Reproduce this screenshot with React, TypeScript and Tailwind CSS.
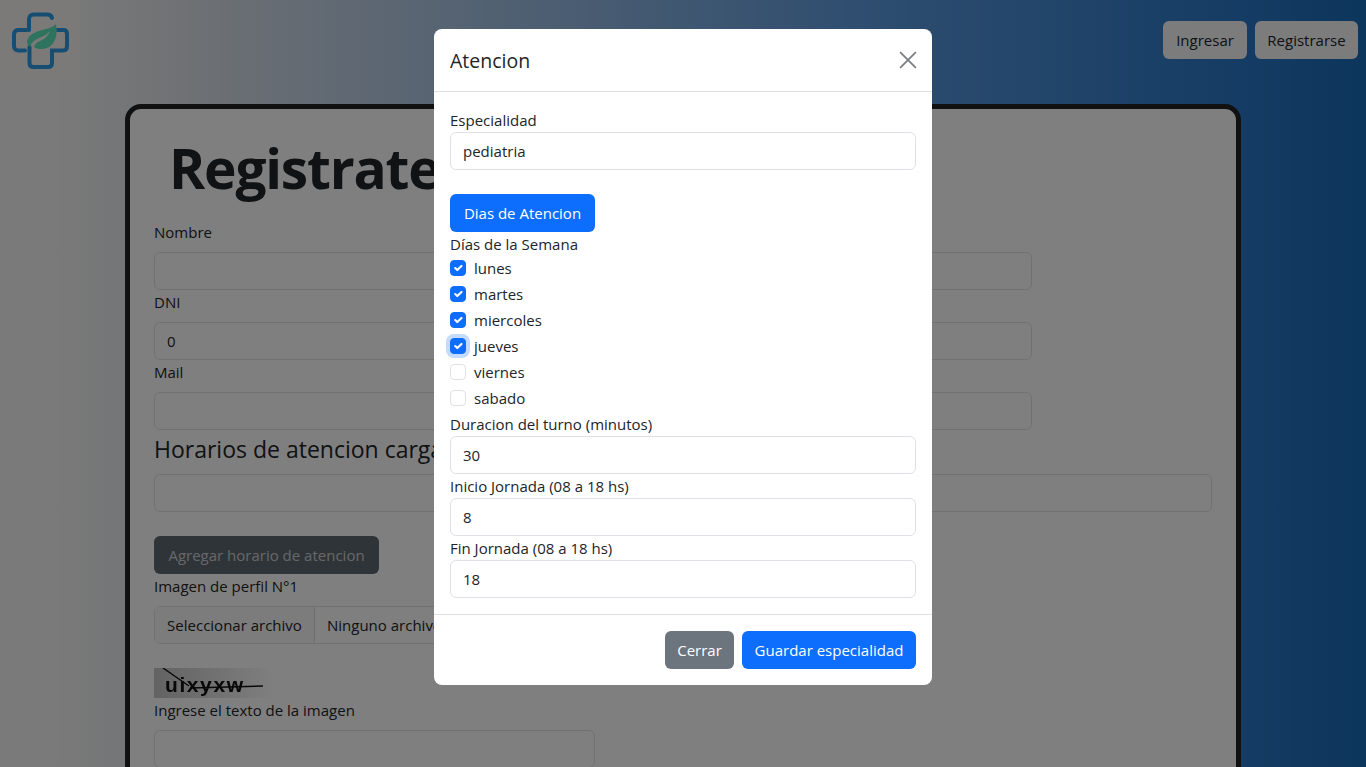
const FONT = "font-['Open_Sans','Noto_Sans',sans-serif]";

const DIAS = [
  { nombre: "lunes", checked: true },
  { nombre: "martes", checked: true },
  { nombre: "miercoles", checked: true },
  { nombre: "jueves", checked: true, focus: true },
  { nombre: "viernes", checked: false },
  { nombre: "sabado", checked: false },
];

const Logo = () => (
  <svg width="80" height="80" viewBox="0 0 80 80" fill="none">
    <path
      d="M29 30V19c0-3 2-4.500 4.500-4.500H47c3 0 4.500 1 5 3.500M27 30H18c-2.500 0-4 2-4 4.500V46c0 3 2 4.500 4 4.500h7M57 30h7c2 0 3 2 3 4.500V46c0 3-1.500 4.500-4 4.500H52V63c0 2.500-1.500 4-4 4H33.500C31 67 29.500 65.500 29.500 63V47"
      stroke="#2a9ce4"
      strokeWidth="4"
      strokeLinecap="round"
    />
    <path d="M56 24c-5 5-13 5-20 8-5 2-8 5-9 9 0 3 1 5 3 6 1-4 4-7 9-9 4-2 8-3 11-7-2 5-5 8-10 10-3 1-5 3-6 6 3 2 8 3 13 1 8-3 11-13 9-24z" fill="#5ce6bc" />
  </svg>
);

const Captcha = () => (
  <svg width="120" height="30" viewBox="0 0 120 30" className="block">
    <defs>
      <linearGradient id="captcha-bg" x1="0" x2="1" y1="0" y2="0">
        <stop offset="0" stopColor="#c6c6c6" />
        <stop offset="0.75" stopColor="#f0f0f0" />
        <stop offset="1" stopColor="#ffffff" />
      </linearGradient>
    </defs>
    <rect width="120" height="30" fill="url(#captcha-bg)" />
    <text x="11" y="24" fontFamily="Liberation Sans" fontWeight="700" fontSize="21" fill="#111" textLength="78" lengthAdjust="spacing" className="blur-[0.6px]">
      uixyxw
    </text>
    <path d="M9 0l26 18M36 20l73-2" stroke="#111" strokeWidth="1.4" fill="none" />
  </svg>
);

const Input = ({ value = "" }: { value?: string }) => (
  <div className="h-[38px] w-full rounded-md border border-[#dee2e6] bg-white px-3 leading-[36px] text-[#212529]">{value}</div>
);

const Field = ({ label, value = "" }: { label: string; value?: string }) => (
  <div>
    <label className="mb-2 block h-6">{label}</label>
    <Input value={value} />
  </div>
);

const ModalField = ({ label, value }: { label: string; value: string }) => (
  <div>
    <label className="block h-6">{label}</label>
    <Input value={value} />
  </div>
);

const Check = ({ nombre, checked, focus }: { nombre: string; checked: boolean; focus?: boolean }) => (
  <div className="flex h-[26px] items-center gap-2 pb-[2px]">
    <span
      className={
        "flex h-4 w-4 items-center justify-center rounded border " +
        (checked ? "border-[#0d6efd] bg-[#0d6efd] " : "border-[#dee2e6] bg-white ") +
        (focus ? "ring-4 ring-[#0d6efd40]" : "")
      }
    >
      {checked && (
        <svg width="14" height="14" viewBox="0 0 20 20" fill="none">
          <path d="m6 10 3 3 6-6" stroke="#fff" strokeWidth="3" strokeLinecap="round" strokeLinejoin="round" />
        </svg>
      )}
    </span>
    <span>{nombre}</span>
  </div>
);

export default function App() {
  return (
    <div className={`${FONT} h-[767px] overflow-hidden bg-[linear-gradient(90deg,#f4f4f4_4%,#e2e6ea_12%,#c8d6e6_22%,#5e9ce0_63%,#2a78c8_91%,#1a6cb8_100%)] text-[15px] leading-6 text-[#212529]`}>
      <nav className="flex h-20 items-center justify-between pr-2">
        <div className="h-20 w-20 bg-[#f8f5f2]">
          <Logo />
        </div>
        <div className="flex gap-2">
          <button className="h-[38px] w-[84px] rounded-md bg-[#f8f9fa]">Ingresar</button>
          <button className="h-[38px] w-[103px] rounded-md bg-[#f8f9fa]">Registrarse</button>
        </div>
      </nav>

      <main className="mx-auto mt-6 h-[800px] w-[1116px] rounded-2xl border-[5px] border-[#222] bg-white px-6">
        <h1 className="h-[111px] pl-[15px] pt-[25px] text-[55px] font-bold leading-[67px] tracking-[-1.2px]">Registrate</h1>
        <div className="w-[878px]">
          <Field label="Nombre" />
          <Field label="DNI" value="0" />
          <Field label="Mail" />
        </div>
        <h4 className="mt-[5px] h-[39px] text-[23px] leading-[28px]">Horarios de atencion cargados</h4>
        <Input />
        <button className="mt-6 block h-[38px] w-[225px] rounded-md bg-[#5f6870] text-white/70">Agregar horario de atencion</button>
        <label className="mb-2 block h-6">Imagen de perfil N°1</label>
        <div className="flex h-[38px] w-[441px] rounded-md border border-[#dee2e6] bg-white">
          <span className="flex w-[160px] items-center justify-center border-r border-[#dee2e6] bg-[#f8f9fa]">Seleccionar archivo</span>
          <span className="flex items-center px-3">Ninguno archivo seleccionado</span>
        </div>
        <div className="mt-6">
          <Captcha />
        </div>
        <label className="mb-2 block h-6">Ingrese el texto de la imagen</label>
        <div className="w-[441px]">
          <Input />
        </div>
      </main>

      <div className="fixed inset-0 bg-black/50" />

      <div className="fixed left-[434px] top-[29px] w-[498px] rounded-lg bg-white">
        <div className="flex h-[63px] items-center justify-between border-b border-[#dee2e6] pl-4 pr-[15px]">
          <h5 className="pt-[2px] text-[19.5px] font-medium">Atencion</h5>
          <svg width="18" height="18" viewBox="0 0 16 16" fill="none">
            <path d="M1 1l14 14M15 1L1 15" stroke="#7c7e80" strokeWidth="1.6" />
          </svg>
        </div>
        <div className="p-4">
          <ModalField label="Especialidad" value="pediatria" />
          <button className="mt-6 block h-[38px] w-[145px] rounded-md bg-[#0d6efd] text-white">Dias de Atencion</button>
          <div className="h-6">Días de la Semana</div>
          {DIAS.map((d) => (
            <Check key={d.nombre} nombre={d.nombre} checked={d.checked} focus={d.focus} />
          ))}
          <ModalField label="Duracion del turno (minutos)" value="30" />
          <ModalField label="Inicio Jornada (08 a 18 hs)" value="8" />
          <ModalField label="Fin Jornada (08 a 18 hs)" value="18" />
        </div>
        <div className="flex justify-end gap-2 border-t border-[#dee2e6] p-4">
          <button className="h-[38px] w-[69px] rounded-md bg-[#6c757d] text-white">Cerrar</button>
          <button className="h-[38px] w-[174px] rounded-md bg-[#0d6efd] text-white">Guardar especialidad</button>
        </div>
      </div>
    </div>
  );
}
